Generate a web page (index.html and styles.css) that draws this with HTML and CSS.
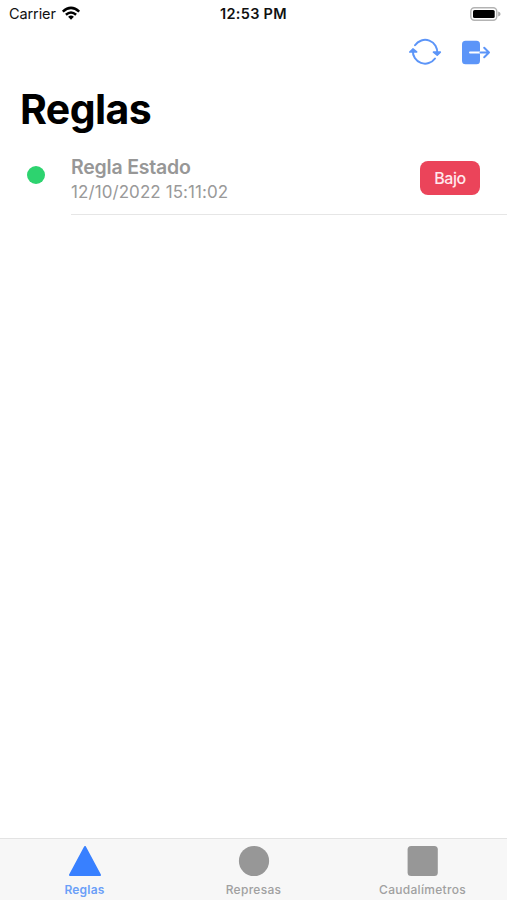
FILE: index.html
```html
<!DOCTYPE html>
<html lang="es">
<head>
<meta charset="utf-8">
<title>Reglas</title>
<link rel="stylesheet" href="styles.css">
</head>
<body>
<div class="app">
  <header class="status">
    <div class="carrier"><span>Carrier</span>
      <svg width="20" height="16" viewBox="0 0 20 16" fill="none" stroke="#000" stroke-width="2.5"><path d="M1.8 5.6Q10 -1.9 18.2 5.6M4.9 8.8Q10 4.3 15.1 8.8"/><path d="M7.1 10.8Q10 8.4 12.9 10.8L10 13.8Z" fill="#000" stroke="none"/></svg>
    </div>
    <time class="time">12:53 PM</time>
    <svg class="battery" width="31" height="14" viewBox="0 0 31 14"><rect x=".8" y=".8" width="26" height="12.4" rx="3.6" fill="#fff" stroke="#b3b3b3" stroke-width="1.4"/><rect x="3" y="3" width="21.7" height="8" rx="1.6"/><path d="M28.2 4.5Q30.6 5.3 30.6 7T28.2 9.5Z" fill="#aaa"/></svg>
  </header>
  <nav class="toolbar">
    <svg width="34" height="30" viewBox="0 0 34 30" fill="none" stroke="#5c95f8" stroke-width="2" stroke-linecap="round" stroke-linejoin="round"><path d="M7 7.2A12.2 12.2 0 0 1 29.2 15.5M27 20.5A12.2 12.2 0 0 1 4.9 12.5"/><path d="M25.5 14.2L29.2 17.2L32.3 14.2ZM1.8 14L4.9 11L8.6 14Z" fill="#5c95f8" stroke-width="1.7"/></svg>
    <svg width="30" height="26" viewBox="0 0 30 26" fill="none" stroke-width="2" stroke-linecap="round" stroke-linejoin="round"><rect x="1" y=".7" width="18" height="23.6" rx="3.5" fill="#5c95f8"/><path d="M9 12.5H18.8" stroke="#fff"/><path d="M19.5 12.5H28M23.2 7.7L28 12.5L23.2 17.3" stroke="#5c95f8"/></svg>
  </nav>
  <h1 class="title">Reglas</h1>
  <main class="list">
    <article class="row">
      <span class="dot"></span>
      <div class="content">
        <div class="info"><div class="name">Regla Estado</div><div class="date">12/10/2022 15:11:02</div></div>
        <span class="badge">Bajo</span>
      </div>
    </article>
  </main>
  <footer class="tabs">
    <div class="tab active"><svg width="34" height="32" viewBox="0 0 34 32"><path d="M17 2L32 30H2Z" fill="#3880ff" stroke="#3880ff" stroke-width="2" stroke-linejoin="round"/></svg><span>Reglas</span></div>
    <div class="tab"><svg width="34" height="32" viewBox="0 0 34 32"><circle cx="17" cy="16" r="15.1" fill="#979797"/></svg><span>Represas</span></div>
    <div class="tab"><svg width="34" height="32" viewBox="0 0 34 32"><rect x="1.6" y="1" width="30.2" height="30" rx="3.5" fill="#979797"/></svg><span>Caudalímetros</span></div>
  </footer>
</div>
</body>
</html>
```
FILE: styles.css
```css
* { box-sizing: border-box; }
body { margin: 0; font-family: Inter, "Liberation Sans", sans-serif; background: #fff; }
svg { display: block; flex: none; }
.app { width: 507px; height: 900px; display: flex; flex-direction: column; overflow: hidden; }
.status { height: 27px; display: grid; grid-template-columns: 1fr auto 1fr; align-items: center; padding: 0 6px 0 9px; color: #111; }
.carrier { display: flex; align-items: center; gap: 5px; font-size: 14.5px; letter-spacing: -.1px; }
.time { margin-right: 3px; font-size: 14.5px; font-weight: 600; letter-spacing: .3px; }
.battery { justify-self: end; }
.toolbar { height: 51px; display: flex; justify-content: flex-end; align-items: center; gap: 20px; padding-right: 16px; }
.toolbar svg:first-child { margin-right: -1px; }
.title { margin: 0; height: 71px; padding: 6px 0 0 20px; font-size: 41px; line-height: 50px; font-weight: 700; letter-spacing: -.6px; color: #000; }
.list { flex: 1; }
.row { display: flex; padding-left: 27px; }
.dot { width: 18px; height: 18px; margin-top: 17px; border-radius: 50%; background: #2dd36f; }
.content { flex: 1; height: 66px; margin-left: 26px; display: flex; justify-content: space-between; padding-right: 27px; border-bottom: 1px solid #e6e6e6; }
.info { padding-top: 6px; }
.name { font-size: 19.5px; line-height: 25px; font-weight: 600; letter-spacing: -.2px; color: #979797; }
.date { font-size: 17px; line-height: 25px; letter-spacing: .08px; color: #999; }
.badge { width: 60px; height: 34px; margin-top: 12px; border-radius: 8px; background: #eb445a; color: #ffe9ed; font-size: 16px; line-height: 34px; font-weight: 500; letter-spacing: -.4px; text-align: center; }
.tabs { height: 62px; display: grid; grid-template-columns: repeat(3, 1fr); background: #f7f7f7; border-top: 1px solid #e3e3e3; }
.tab { display: flex; flex-direction: column; align-items: center; padding-top: 6px; font-size: 12px; line-height: 16px; font-weight: 500; letter-spacing: .3px; color: #a0a0a0; }
.tab span { margin-top: 5px; }
.active { color: #6b9ff8; font-weight: 600; letter-spacing: .2px; }
```
